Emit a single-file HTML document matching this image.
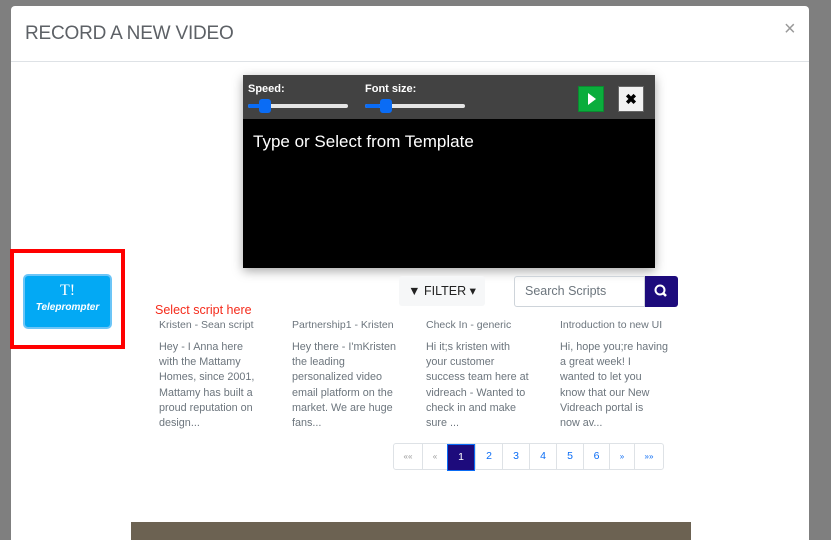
<!DOCTYPE html>
<html><head><style>
html,body{margin:0;width:831px;height:540px;overflow:hidden}
body{background:#7f7f7f;font-family:"Liberation Sans",sans-serif;position:relative}
.modal{position:absolute;left:11px;top:6px;width:798px;height:540px;background:#fff;border-radius:4px 4px 0 0}
.hdr{position:absolute;left:0;top:0;width:798px;height:55px;border-bottom:1px solid #dee2e6}
.hdr h1{position:absolute;left:14px;top:17px;margin:0;font-size:19px;font-weight:normal;color:#5d6166;letter-spacing:-0.2px}
.close{position:absolute;left:773px;top:12px;font-size:20px;color:#999}
.a{position:absolute}
.tp{left:243px;top:75px;width:412px;height:193px;background:#000;box-shadow:0 3px 10px rgba(0,0,0,.35)}
.tph{position:absolute;left:0;top:0;width:412px;height:44px;background:#424242}
.lbl{position:absolute;color:#fff;font-size:11px;font-weight:bold;top:8px}
.trk{position:absolute;height:4px;background:#e5e5e5;border-radius:2px;top:29px}
.fill{position:absolute;height:4px;background:#0a6cf5;top:29px;border-radius:2px}
.th{position:absolute;width:12px;height:14px;background:#0a6cf5;border-radius:3px;top:24px}
.col{position:absolute;top:319px;width:110px;color:#6c757d;font-size:10.8px;white-space:nowrap}
.col .t{height:21px;font-size:10.5px}
.col p{margin:0;line-height:15.2px}
.pg{position:absolute;top:443px;left:393px;height:25px;border:1px solid #dee2e6;border-radius:3px;display:flex}
.pg div{height:25px;line-height:25px;text-align:center;font-size:10.5px;color:#0a6cf5;border-left:1px solid #dee2e6}
</style></head><body>
<div class="modal">
<div class="hdr"><h1>RECORD A NEW VIDEO</h1><div class="close">×</div></div>
</div>
<div class="a tp"><div class="tph">
<div class="lbl" style="left:5px">Speed:</div>
<div class="trk" style="left:5px;width:100px"></div><div class="fill" style="left:5px;width:16px"></div><div class="th" style="left:16px"></div>
<div class="lbl" style="left:122px">Font size:</div>
<div class="trk" style="left:122px;width:100px"></div><div class="fill" style="left:122px;width:16px"></div><div class="th" style="left:137px"></div>
<div style="position:absolute;left:335px;top:11px;width:24px;height:24px;background:#0aad3c;border:1px solid #0b8a30"><svg width="24" height="24"><path d="M9 6 L17 12 L9 18Z" fill="#fff"/></svg></div>
<div style="position:absolute;left:375px;top:11px;width:24px;height:24px;background:#f2f2f2;border:1px solid #666;text-align:center;line-height:24px;font-weight:bold;font-size:14px">✖</div>
</div>
<div style="position:absolute;left:10px;top:57px;color:#fff;font-size:17px">Type or Select from Template</div>
</div>
<div class="a" style="left:10px;top:249px;width:107px;height:92px;border:4px solid #f00"></div>
<div class="a" style="left:23px;top:274px;width:85px;height:51px;background:#03a9f4;border:2px solid #6cc5f7;border-radius:5px;color:#fff;text-align:center">
<div style="font-family:'Liberation Serif',serif;font-size:16px;margin-top:6px">T!</div>
<div style="font-size:10px;font-style:italic;font-weight:bold;margin-top:2px">Teleprompter</div></div>
<div class="a" style="left:155px;top:303px;color:#f52b1b;font-size:12.5px">Select script here</div>
<div class="a" style="left:399px;top:276px;width:86px;height:30px;background:#f6f7f8;border-radius:3px;font-size:12.5px;color:#222;line-height:30px;text-align:center">▼ FILTER ▾</div>
<div class="a" style="left:514px;top:276px;border:1px solid #ced4da;border-radius:3px 0 0 3px;font-size:12.5px;color:#6c757d;line-height:29px;padding-left:10px;box-sizing:border-box;width:131px;height:31px">Search Scripts</div>
<div class="a" style="left:645px;top:276px;width:33px;height:31px;background:#1d0b7c;border-radius:0 3px 3px 0"><svg width="33" height="31"><circle cx="15" cy="14" r="4.5" stroke="#fff" stroke-width="2" fill="none"/><path d="M18 17 L21 20" stroke="#fff" stroke-width="2.5"/></svg></div>
<div class="col" style="left:159px"><div class="t">Kristen - Sean script</div><p>Hey - I Anna here<br>with the Mattamy<br>Homes, since 2001,<br>Mattamy has built a<br>proud reputation on<br>design...</p></div>
<div class="col" style="left:292px"><div class="t">Partnership1 - Kristen</div><p>Hey there - I'mKristen<br>the leading<br>personalized video<br>email platform on the<br>market. We are huge<br>fans...</p></div>
<div class="col" style="left:426px"><div class="t">Check In - generic</div><p>Hi it;s kristen with<br>your customer<br>success team here at<br>vidreach - Wanted to<br>check in and make<br>sure ...</p></div>
<div class="col" style="left:560px"><div class="t">Introduction to new UI</div><p>Hi, hope you;re having<br>a great week! I<br>wanted to let you<br>know that our New<br>Vidreach portal is<br>now av...</p></div>
<div class="pg">
<div style="width:28px;border:0;color:#999;font-size:8px">««</div><div style="width:24px;color:#999;font-size:8px">«</div><div style="width:26px;background:#1d0b7c;color:#fff;border:1px solid #0a6cf5">1</div><div style="width:26px">2</div><div style="width:26px">3</div><div style="width:26px">4</div><div style="width:26px">5</div><div style="width:25px">6</div><div style="width:24px;font-size:8px">»</div><div style="width:28px;font-size:8px">»»</div>
</div>
<div class="a" style="left:131px;top:522px;width:560px;height:18px;background:#6c6252"></div>
</body></html>
